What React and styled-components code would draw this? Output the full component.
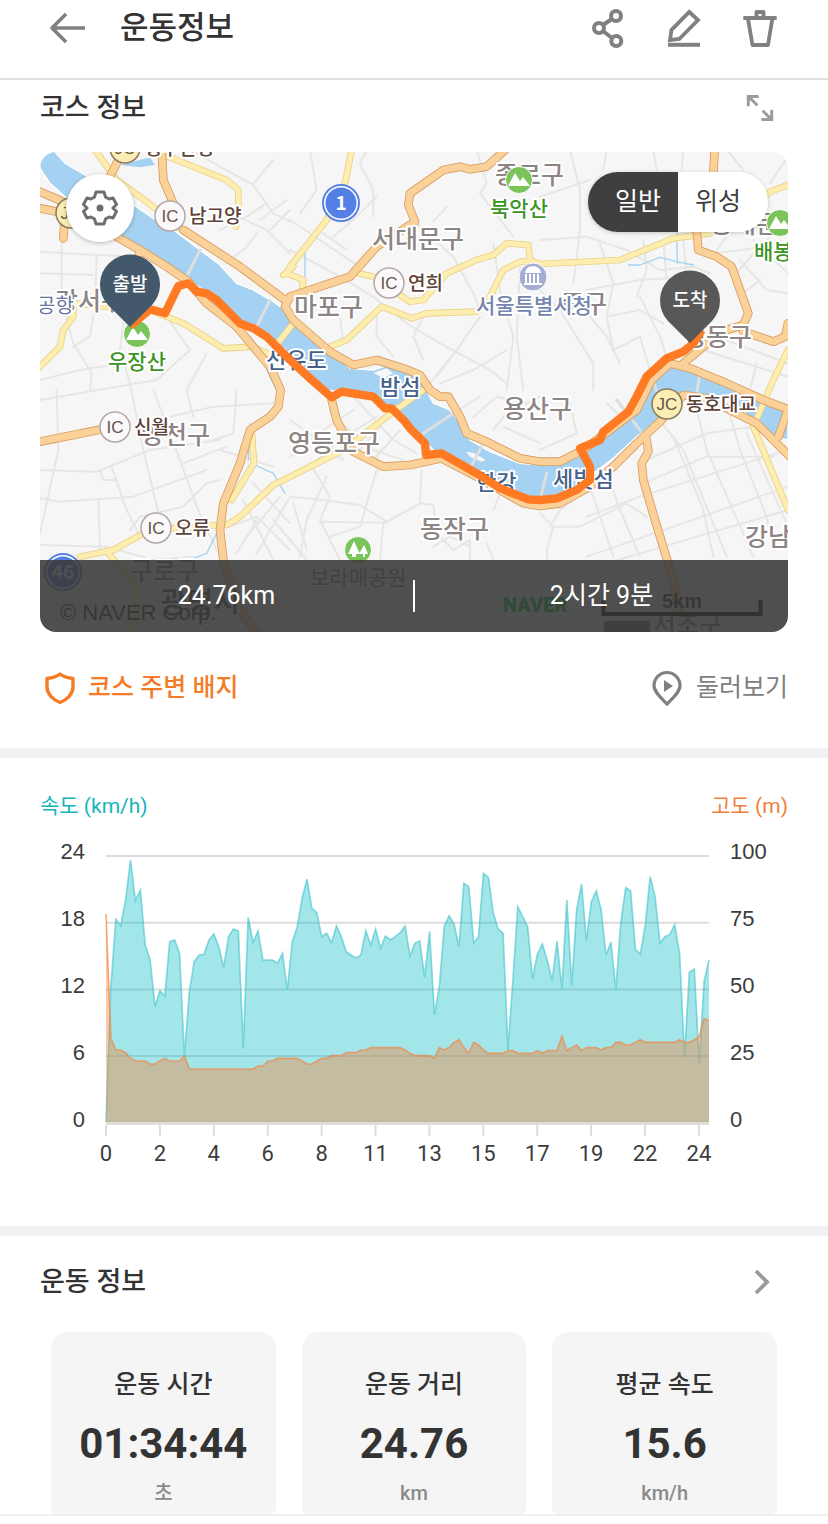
import React, { useState } from 'react'
import styled, { createGlobalStyle } from 'styled-components'

const GlobalStyle = createGlobalStyle`
*{
  box-sizing:border-box;
}
body{
  margin:0;
  background-color:#ffffff;
  color:#333333;
  font-family:Roboto,"Noto Sans CJK KR",sans-serif;
}
button{
  padding:0;
  border:none;
  background:transparent;
  color:inherit;
  font:inherit;
  cursor:pointer;
}
svg{
  display:block;
}
`
const Header = styled.header`
display:flex;
align-items:center;
padding:0 48px 22px;
border-bottom:2px solid #e2e2e2;
`
const PageTitle = styled.h1`
flex:1;
margin:0 0 0 32px;
font-size:31px;
line-height:56px;
font-weight:500;
`
const Tools = styled.div`
display:flex;
gap:36px;
`
const IconButton = styled.button`
display:flex;
color:${({ $soft }) => ($soft ? '#9b9b9b' : '#808080')};
`
const Section = styled.section`
padding:0 40px;
`
const SectionHead = styled.div`
display:flex;
align-items:center;
justify-content:space-between;
padding:${({ $wide }) => ($wide ? '26px 6px 30px 0' : '8px 8px 24px 0')};
`
const SectionTitle = styled.h2`
margin:0;
font-size:27px;
line-height:40px;
font-weight:500;
`
const MapCard = styled.div`
position:relative;
height:480px;
border-radius:16px;
overflow:hidden;
background-color:#f6f6f6;
`
const MapDrawing = styled.svg`
width:100%;
height:100%;
font-family:"Noto Sans CJK KR",sans-serif;
`
const SettingsButton = styled.button`
position:absolute;
top:22px;
left:26px;
width:68px;
height:68px;
display:flex;
align-items:center;
justify-content:center;
border-radius:50%;
background-color:#ffffff;
color:#6e6e6e;
box-shadow:0 1px 4px rgba(0,0,0,0.25);
`
const Toggle = styled.div`
position:absolute;
top:20px;
right:20px;
display:flex;
border-radius:30px;
overflow:hidden;
box-shadow:0 1px 4px rgba(0,0,0,0.2);
`
const ToggleButton = styled.button`
width:90px;
height:60px;
padding:${({ $side }) => ($side === 'left' ? '0 0 0 10px' : '0 10px 0 0')};
font-size:25px;
line-height:60px;
background-color:${({ $active }) => ($active ? '#3f3f3f' : '#ffffff')};
color:${({ $active }) => ($active ? '#ffffff' : '#3f3f3f')};
`
const Summary = styled.div`
position:absolute;
left:0;
right:0;
bottom:0;
display:flex;
align-items:center;
height:72px;
background-color:rgba(56,56,56,0.88);
color:#ffffff;
font-size:25px;
line-height:36px;
`
const SummaryItem = styled.span`
flex:1;
text-align:center;
`
const SummaryLine = styled.span`
width:2px;
height:32px;
background-color:#ffffff;
`
const Actions = styled.div`
display:flex;
justify-content:space-between;
padding:36px 0 40px;
`
const Action = styled.button`
display:flex;
align-items:center;
gap:8px;
font-size:25px;
line-height:40px;
font-weight:${({ $accent }) => ($accent ? 500 : 400)};
color:${({ $accent }) => ($accent ? '#f57b26' : '#808080')};
`
const Divider = styled.div`
height:10px;
background-color:#f1f2f4;
`
const Legend = styled.div`
display:flex;
justify-content:space-between;
padding:30px 0 12px;
`
const LegendItem = styled.span`
font-size:21px;
line-height:36px;
color:${({ $color }) => $color};
`
const Chart = styled.svg`
width:100%;
margin-bottom:50px;
fill:#3c3c3c;
`
const Cards = styled.div`
display:grid;
grid-template-columns:repeat(3,1fr);
gap:26px;
padding:0 11px;
`
const Card = styled.div`
padding:34px 0 7px;
border-radius:16px 16px 6px 6px;
background-color:#f5f5f5;
text-align:center;
`
const CardTitle = styled.div`
font-size:25px;
line-height:38px;
font-weight:500;
`
const CardValue = styled.div`
margin:15px 0 10px;
font-size:42px;
line-height:50px;
font-weight:700;
`
const CardUnit = styled.div`
font-size:20px;
line-height:28px;
font-weight:500;
color:#8a8a8a;
`
const Footer = styled.footer`
height:10px;
border-top:2px solid #f0f0f0;
`

// map geometry uses a grid of 3 units per pixel
const river = 'M40,0 L75,40 L130,72 L285,168 L340,205 L400,240 L480,300 L540,345 L590,400 L640,420 L700,455 L750,490 L870,605 L930,655 L1000,660 L1060,640 L1110,665 L1150,705 L1180,760 L1230,780 L1270,830 L1290,870 L1350,905 L1440,940 L1500,945 L1580,935 L1640,890 L1690,870 L1790,780 L1830,690 L1890,640 L1950,650 L2060,700 L2244,770 L2244,870 L2200,860 L2140,810 L2060,740 L1930,745 L1870,800 L1790,860 L1720,925 L1660,970 L1600,1020 L1500,1050 L1465,1048 L1370,1010 L1310,960 L1190,910 L1160,880 L1095,815 L1040,770 L1000,740 L860,720 L800,680 L750,620 L650,540 L580,510 L530,450 L490,420 L440,385 L290,290 L200,230 L80,145 L30,100 L0,55 L0,0 Z'

const track = 'M270,528 L330,478 L375,490 L415,408 L445,400 L470,425 L500,430 L530,450 L600,520 L640,535 L680,560 L750,630 L810,685 L875,742 L905,725 L1000,740 L1035,775 L1055,775 L1095,815 L1110,835 L1155,880 L1158,915 L1205,910 L1310,970 L1380,1015 L1465,1048 L1500,1050 L1550,1045 L1610,1020 L1650,990 L1650,950 L1620,895 L1680,870 L1690,845 L1765,785 L1790,740 L1820,680 L1880,625 L1930,605 L1960,580 L1985,540'

const highways = [
  'M430,240 L600,350 L735,450',
  'M0,125 L80,160 L230,260 L300,300 L380,350 L445,395 L500,460 L590,530 L640,590 L690,650 L722,720 L715,770 L690,800 L630,840 L600,940 L550,1060 L540,1140 L550,1230 L600,1380 L650,1450',
  'M0,175 L75,190 L70,265',
  'M300,300 L290,350',
  'M365,0 L370,90 L400,160',
  'M250,0 L210,80',
  'M1395,0 L1340,50 L1290,58 L1260,50 L1210,60 L1110,130 L1105,165 L1125,215 L1010,290 L930,380 L750,440 L735,470 L760,510 L870,605 L940,645 L1010,630 L1090,655 L1140,675 L1170,720 L1200,740 L1225,740 L1260,800 L1280,850 L1350,880 L1440,925 L1500,935 L1560,935 L1630,900 L1790,780 L1835,690 L1890,640 L1950,655 L2060,700 L2170,750 L2250,780',
  'M1930,640 L1990,590 L2060,540 L2110,525 L2125,490 L2075,350 L2030,320 L1975,300 L1970,240',
  'M2024,0 L2020,70',
  'M2110,545 L2200,575 L2235,560 L2244,520',
  'M1205,925 L1310,980 L1450,1060 L1500,1068 L1560,1060 L1650,1010 L1720,950 L1790,880 L1860,815 L1930,735 L2000,745 L2150,820 L2200,870 L2250,920',
  'M2244,780 L2215,860',
  'M1820,870 L1825,905 L1805,940 L1810,990 L1845,1110 L1900,1290 L1930,1450',
  'M875,750 L890,810 L940,905 L1030,950 L1110,945 L1205,925',
  'M0,875 L100,855 L200,835',
]
const roads = [
  'M165,0 L230,90 L300,140 L430,240',
  'M385,20 L560,90 L595,120 L595,170 L588,230',
  'M935,0 L915,100 L860,210 L750,350 L740,370 L790,390 L785,430',
  'M955,370 L1000,380 L1080,435 L1110,455 L1150,450 L1220,370 L1310,330 L1360,315 L1400,280 L1465,285 L1470,330 L1500,342 L1740,330 L1900,265 L2010,250 L2120,190 L2190,125 L2244,105',
  'M870,590 L920,570 L1025,470 L1115,505 L1160,490 L1310,485 L1350,440 L1390,360 L1440,335 L1470,335',
  'M330,480 L430,520 L550,595 L640,590 L700,620',
  'M0,650 L60,590 L70,540 L100,500 L100,460 L200,470',
  'M1150,720 L1080,770 L910,900 L750,980 L700,1005 L600,1100 L560,1125 L540,1120',
  'M635,840 L642,940 L575,1050',
  'M120,1220 L220,1200 L310,1150 L400,1135 L540,1125',
  'M205,1210 L290,1310 L290,1380 L260,1450',
  'M2244,600 L2200,690 L2140,830 L2244,1080',
  'M760,520 L705,590',
  'M730,375 L760,350',
]
const streets = [
  'M0,305 L170,315 L300,320', 'M170,315 L165,470 L150,560 L100,590', 'M65,280 L65,450 L100,580 L155,670 L150,720',
  'M0,370 L160,375', 'M450,0 L640,105 L700,190 L750,215', 'M700,30 L640,100', 'M595,200 L680,240 L750,310',
  'M540,240 L620,200 L680,160', 'M560,340 L620,290 L650,250', 'M660,210 L740,150', 'M690,240 L750,180', 'M480,300 L440,380 L380,500', 'M690,450 L650,530',
  'M0,690 L120,660 L250,640', 'M250,520 L240,600 L270,700 L310,900 L370,1150', 'M380,500 L450,600 L350,690 L0,750', 'M500,610 L440,720 L460,800',
  'M0,960 L170,965 L330,900 L540,870', 'M0,1045 L60,1055 L280,1040 L500,960', 'M50,720 L55,900 L0,1150', 'M175,1045 L180,1200', 'M180,960 L190,990 L225,990', 'M340,720 L420,930 L470,1070 L530,1200',
  'M270,1140 L300,1100 L430,1070 L500,1000 L540,990', 'M0,1185 L200,1190 L340,1230 L460,1220', 'M215,950 L260,1080 L300,1160', 'M430,940 L560,890', 'M540,900 L700,950', 'M590,720 L580,850 L520,870', 'M390,800 L520,770 L700,760',
  'M750,210 L840,270 L950,345', 'M850,250 L920,300', 'M810,0 L830,120 L780,190', 'M980,0 L960,40 L1000,120 L1000,200', 'M880,260 L950,200 L1010,140', 'M750,300 L900,380 L1000,440 L1100,520 L1200,580 L1350,660 L1400,700',
  'M1125,215 L1240,320 L1300,430 L1320,480', 'M1220,170 L1180,215', 'M1310,0 L1340,100 L1320,130 L1420,260', 'M1360,280 L1380,420 L1420,560 L1400,720', 'M1440,350 L1430,560 L1450,720', 'M1250,600 L1190,680', 'M1150,500 L1120,560 L1150,630', 'M1010,480 L1010,560 L1060,620', 'M900,500 L910,580',
  'M1320,500 L1250,600 L1170,700', 'M1400,600 L1300,660 L1200,700', 'M1500,420 L1560,480 L1660,640 L1660,720', 'M1600,440 L1700,560 L1740,640',
  'M1590,0 L1620,120 L1620,240 L1600,400', 'M1500,270 L1640,260 L1760,300 L1860,360 L1960,350 L2010,370', 'M1680,280 L1720,400 L1700,500 L1720,600', 'M1640,420 L1800,390 L1960,380', 'M1810,270 L1820,360 L1790,440', 'M1870,270 L1880,390', 'M1930,270 L1940,380', 'M1700,0 L1690,60', 'M1840,0 L1850,60', 'M1930,0 L1925,60', 'M1500,140 L1650,90',
  'M2020,310 L2100,300 L2180,290', 'M2080,380 L2150,300 L2244,210', 'M2100,330 L2180,420 L2244,430', 'M2140,270 L2244,370', 'M2030,300 L2060,260', 'M2110,430 L2160,390', 'M2190,100 L2244,20', 'M2060,0 L2110,60', 'M1990,600 L2244,680', 'M2030,560 L2244,640', 'M1700,500 L1800,480 L1870,520', 'M1800,440 L1860,560 L1880,620', 'M1720,600 L1800,560 L1830,660', 'M2150,640 L2130,720',
  'M1850,690 L1860,760', 'M1980,660 L1970,730', 'M1700,760 L1810,860', 'M1520,980 L1500,1060', 'M1150,850 L1240,790 L1320,740', 'M1320,890 L1290,960',
  'M1640,1100 L1800,1040 L2244,900', 'M1640,1220 L1900,1130 L2244,1010', 'M1700,1240 L2244,1080', 'M1820,930 L2000,850 L2140,830', 'M1810,1000 L2000,920 L2200,920', 'M1850,800 L1930,900 L2060,1220', 'M1960,740 L2000,900 L2140,1220', 'M2060,760 L2100,900 L2180,1100 L2200,1200', 'M1900,860 L1990,1080 L2020,1220', 'M2120,850 L2244,1130', 'M1700,970 L1740,1080 L1800,1220', 'M1650,1010 L1720,1220', 'M1500,1090 L1540,1130 L1620,1130 L1760,1060 L1820,1100', 'M1540,1130 L1520,1200 L1530,1300', 'M1650,1010 L1560,1080 L1530,1130',
  'M750,920 L850,840 L940,780', 'M800,960 L900,870 L1010,800', 'M750,810 L850,880 L910,930', 'M870,790 L1000,900 L1090,930', 'M940,740 L1060,870 L1130,910', 'M1000,930 L1080,840', 'M950,910 L1020,830',
  'M750,1040 L850,1050 L960,1065 L1040,1115 L1140,1060 L1145,960', 'M1010,960 L960,1130 L870,1160', 'M860,980 L800,1110 L780,1220', 'M810,940 L870,1040 L840,1110 L900,1230', 'M840,1115 L1040,1118', 'M1030,1120 L1020,1230', 'M1140,1060 L1180,1065 L1190,1150 L1240,1200 L1290,1170 L1290,1230', 'M1180,1190 L1230,1160 L1290,1190', 'M1340,1180 L1360,1230', 'M1380,1030 L1360,1080', 'M760,1060 L800,1200', 'M700,1110 L800,1230', 'M610,1050 L700,1230', 'M640,1000 L750,1120', 'M570,1130 L650,1100 L750,1200', 'M650,1210 L750,1040', 'M620,1160 L720,1040', 'M590,1210 L650,1110',
  'M1360,840 L1400,790 L1500,740', 'M1390,830 L1500,880', 'M1590,760 L1610,850 L1500,900', 'M1300,800 L1370,740 L1460,760',
]
const bridges = ['M480,300 L440,380', 'M690,450 L650,530', 'M1150,850 L1240,790', 'M1325,890 L1295,945', 'M1520,970 L1500,1050', 'M1730,750 L1800,840', 'M1840,690 L1860,760', 'M1980,670 L1970,730']
const streams = ['M635,600 L670,630 L690,680 L720,740', 'M645,945 L700,970 L735,1030', 'M630,820 L625,930', 'M795,310 L795,380', 'M1765,345 L1800,345 L1860,322 L1910,335 L1960,345', 'M1910,250 L1912,340', 'M560,1020 L530,1150 L500,1210 L460,1225']

const districts = [
  [15, 158, '강서구'], [332, 96, '서대문구'], [254, 164, '마포구'], [455, 32, '종로구'], [521, 161, '중구'],
  [463, 266, '용산구'], [248, 300, '영등포구'], [380, 386, '동작구'], [101, 292, '양천구'], [643, 194, '성동구'],
  [670, 81, '동대문구'], [705, 394, '강남구'], [90, 428, '구로구'], [613, 481, '서초구'],
]
const waters = [[226, 216, '선유도'], [340, 243, '밤섬'], [436, 338, '한강'], [513, 335, '세빛섬']]
const junctions = [
  [130, 64, 'IC', '남고양'], [349, 131, 'IC', '연희'], [75, 275, 'IC', '신월'], [116, 376, 'IC', '오류'],
  [627, 252, 'JC', '동호대교'], [31, 61, 'JC', ''], [85, -4, 'JC', '행주산성'],
]
const mountains = [[97, 182, 68, 217, '우장산'], [479, 28, 450, 64, '북악산'], [740, 71, 714, 107, '배봉산']]

// one sample every 0.2km, measured down from the top edge of the plot (3 units per pixel)
const speed = [1025, 620, 418, 438, 360, 240, 362, 330, 495, 540, 680, 632, 648, 485, 480, 520, 830, 635, 545, 525, 523, 480, 462, 500, 562, 470, 447, 453, 806, 412, 487, 453, 540, 540, 540, 550, 520, 630, 485, 440, 355, 298, 385, 398, 470, 460, 488, 438, 470, 515, 525, 534, 525, 452, 495, 447, 505, 468, 480, 470, 458, 438, 528, 490, 483, 592, 454, 704, 620, 438, 407, 432, 500, 310, 320, 490, 470, 280, 292, 400, 447, 460, 810, 600, 380, 410, 440, 597, 522, 492, 540, 602, 484, 628, 360, 616, 390, 312, 482, 365, 333, 390, 526, 486, 630, 430, 323, 333, 508, 522, 435, 290, 350, 490, 470, 464, 434, 520, 832, 577, 567, 850, 605, 540]
const altitude = [402, 775, 810, 810, 818, 835, 843, 843, 843, 852, 852, 843, 835, 843, 843, 843, 828, 867, 867, 867, 867, 867, 867, 867, 867, 867, 867, 867, 867, 867, 867, 858, 858, 843, 843, 835, 835, 835, 835, 835, 843, 852, 852, 843, 835, 835, 827, 827, 827, 818, 818, 818, 810, 810, 803, 803, 803, 803, 803, 803, 803, 810, 820, 827, 827, 827, 827, 835, 803, 810, 803, 787, 779, 803, 820, 787, 795, 810, 820, 820, 820, 820, 812, 812, 820, 820, 820, 820, 812, 820, 812, 812, 812, 769, 812, 803, 795, 812, 803, 803, 803, 810, 803, 803, 787, 787, 795, 795, 787, 779, 787, 787, 787, 787, 787, 787, 787, 779, 787, 787, 779, 770, 716, 722]
const toPoints = (list) => list.map((y, i) => `${(i * 1809) / (list.length - 1)},${y}`).join(' ')
const rows = [[24, 100], [18, 75], [12, 50], [6, 25], [0, 0]]
const ticks = [0, 2, 4, 6, 8, 11, 13, 15, 17, 19, 22, 24]

const stats = [
  { title: '운동 시간', value: '01:34:44', unit: '초' },
  { title: '운동 거리', value: '24.76', unit: 'km' },
  { title: '평균 속도', value: '15.6', unit: 'km/h' },
]

function Lines({ list, color, width }) {
  return list.map((d) => <path key={d} d={d} fill="none" stroke={color} strokeWidth={width} strokeLinejoin="round" strokeLinecap="round" />)
}

function Pin({ x, y, color, children }) {
  return (
    <g transform={`translate(${x} ${y})`}>
      <path d="M0,43 L-22,21 A30,30 0 1 1 22,21 Z" fill={color} />
      <text y="7" textAnchor="middle" fontSize="19" fontWeight="500" fill="#fff">{children}</text>
    </g>
  )
}

function CourseMap() {
  const halo = { stroke: '#fff', strokeWidth: 4, strokeLinejoin: 'round', paintOrder: 'stroke' }
  return (
    <MapDrawing viewBox="0 0 748 480" preserveAspectRatio="xMidYMid slice" role="img" aria-label="코스 지도">
      <g transform="translate(0 -2) scale(0.33333)">
        <Lines list={streets} color="#e6e6e4" width={6} />
        <path d={river} fill="#a5d2f2" stroke="#fff" strokeWidth="4" />
        <path d="M240,45 L330,22 L345,45 L300,52 Z" fill="#a5d2f2" />
        <path d="M1000,668 L1040,655 L1060,670 L1030,685 Z M1278,905 L1300,908 L1338,930 L1325,935 L1290,920 Z" fill="#f6f6f6" />
        <Lines list={bridges} color="#dcdfe0" width={9} />
        <Lines list={streams} color="#a5d2f2" width={4} />
        <Lines list={roads} color="#ead084" width={20} />
        <Lines list={roads} color="#fdeeb0" width={15} />
        <Lines list={highways} color="#d99a5c" width={26} />
        <Lines list={highways} color="#f9d199" width={21} />
      </g>

      <g fontSize="25" fontWeight="500" fill="#8d8484" {...halo}>
        {districts.map(([x, y, name]) => <text key={name} x={x} y={y}>{name}</text>)}
      </g>
      <text x="120" y="461" fontSize="29" fontWeight="500" fill="#555" {...halo}>광명시</text>
      <g fontSize="22" fill="#46618a" fontWeight="500" {...halo}>
        {waters.map(([x, y, name]) => <text key={name} x={x} y={y}>{name}</text>)}
      </g>
      <text x="-3" y="161" fontSize="20" fill="#66759b" {...halo}>공항</text>
      <text x="436" y="161" fontSize="21" fill="#7485b0" fontWeight="500" {...halo}>서울특별시청</text>

      <circle cx="493" cy="125" r="14" fill="#a3add2" stroke="#fff" />
      <path d="M485,121 A8,7 0 0 1 501,121 Z M485,122 H487 V131 H485 Z M489,122 H491 V131 H489 Z M493,122 H495 V131 H493 Z M497,122 H499 V131 H497 Z M484,131 H502 V133 H484 Z" fill="#fff" />

      {junctions.map(([x, y, type, name]) => (
        <g key={`${x}-${y}`}>
          <circle cx={x} cy={y} r="15" fill={type === 'JC' ? '#fbeeb4' : '#fbf9f9'} stroke={type === 'JC' ? '#8d7a5c' : '#b5a8a8'} strokeWidth="1.5" />
          <text x={x} y={y + 6} textAnchor="middle" fontSize="17" fontWeight="500" fontFamily="Liberation Sans, sans-serif" fill="#66534c">{type}</text>
          <text x={x + 19} y={y + 7} fontSize="19" fontWeight="500" fill="#5c4238" {...halo}>{name}</text>
        </g>
      ))}

      {mountains.map(([cx, cy, x, y, name]) => (
        <g key={name}>
          <circle cx={cx} cy={cy} r="13.5" fill="#7bc35b" stroke="#fff" />
          <path d={`M${cx - 11},${cy + 6} L${cx - 4},${cy - 7} L${cx + 1},${cy + 1} L${cx + 4},${cy - 3} L${cx + 11},${cy + 6} Z`} fill="#fff" />
          <text x={x} y={y} fontSize="21" fontWeight="500" fill="#3c9426" {...halo}>{name}</text>
        </g>
      ))}
      <circle cx="318" cy="398" r="13.5" fill="#7bc35b" stroke="#fff" />
      <path d="M314,389 L320,402 H316 V405 H312 V402 H308 Z M324,393 L328,402 H325 V405 H323 V402 H319 Z" fill="#fff" />
      <text x="270" y="433" fontSize="21" fill="#6e8a62" {...halo}>보라매공원</text>

      {[[301, 51, '1'], [23, 420, '46']].map(([x, y, no]) => (
        <g key={no}>
          <circle cx={x} cy={y} r="18" fill="#fff" stroke="#5a82e4" strokeWidth="2" />
          <circle cx={x} cy={y} r="15.5" fill="#5480e6" />
          <text x={x} y={y + 7} textAnchor="middle" fontSize="19" fontWeight="700" fill="#fff">{no}</text>
        </g>
      ))}

      <text x="20" y="468" fontSize="22" fontFamily="Liberation Sans, sans-serif" fill="#333">© NAVER Corp.</text>
      <rect x="452" y="440" width="90" height="30" rx="15" fill="#fff" />
      <text x="463" y="460" fontSize="20" fontWeight="900" fontFamily="Roboto, sans-serif" fill="#00c73c">NAVER</text>
      <text x="622" y="456" fontSize="20" fontWeight="700" fontFamily="Liberation Sans, sans-serif" fill="#333">5km</text>
      <path d="M563.5,448 V462 H720.5 V448" fill="none" stroke="#000" strokeWidth="4" />
      <rect x="564" y="469" width="46" height="11" fill="#777" />

      <g transform="translate(0 -2) scale(0.33333)">
        <path d={track} fill="none" stroke="#ff7a22" strokeWidth="25" strokeLinejoin="round" />
      </g>
      <Pin x={90} y={132} color="#44586b">출발</Pin>
      <Pin x={650} y={148} color="#585858">도착</Pin>
    </MapDrawing>
  )
}

function SpeedChart() {
  return (
    <Chart viewBox="0 0 748 340" role="img" aria-label="속도와 고도 그래프">
      {rows.map(([left, right], i) => (
        <g key={left} fontFamily="Liberation Sans, sans-serif" fontSize="22">
          <line x1="66" x2="669" y1={20 + i * 66.7} y2={20 + i * 66.7} stroke="#dddddd" strokeWidth="2" />
          <text x="45" y={23 + i * 67} textAnchor="end">{left}</text>
          <text x="690" y={23 + i * 67}>{right}</text>
        </g>
      ))}
      <g transform="translate(66 -56) scale(0.33333)">
        <polygon points={`${toPoints(speed)} 1809,1026 0,1026`} fill="#00b9c4" fillOpacity="0.36" />
        <polyline points={toPoints(speed)} fill="none" stroke="#3fc3cb" strokeOpacity="0.6" strokeWidth="5" />
        <polygon points={`${toPoints(altitude)} 1809,1026 0,1026`} fill="#f4823c" fillOpacity="0.42" />
        <polyline points={toPoints(altitude)} fill="none" stroke="#f4823c" strokeOpacity="0.65" strokeWidth="5" />
      </g>
      <line x1="66" x2="669" y1="288" y2="288" stroke="#dddddd" strokeWidth="2" />
      {ticks.map((tick, i) => (
        <g key={tick} fontSize="22">
          <line x1={66 + i * 53.9} x2={66 + i * 53.9} y1="289" y2="300" stroke="#dddddd" strokeWidth="2" />
          <text x={66 + i * 53.9} y="325" textAnchor="middle">{tick}</text>
        </g>
      ))}
    </Chart>
  )
}

export default function App() {
  const [view, setView] = useState('normal')

  return (
    <>
      <GlobalStyle />
      <Header>
        <IconButton aria-label="뒤로">
          <svg width="40" height="40" viewBox="0 0 40 40" fill="none" stroke="currentColor" strokeWidth="3.6" strokeLinejoin="round">
            <path d="M37,20 H4 M18,6 L4,20 L18,34" />
          </svg>
        </IconButton>
        <PageTitle>운동정보</PageTitle>
        <Tools>
          <IconButton aria-label="공유">
            <svg width="40" height="40" viewBox="0 0 40 40" fill="none" stroke="currentColor" strokeWidth="4">
              <circle cx="28" cy="8" r="5" />
              <circle cx="11" cy="20" r="5" />
              <circle cx="28.3" cy="33" r="5" />
              <path d="M24,11 L15,17 M15,23 L24,30" />
            </svg>
          </IconButton>
          <IconButton aria-label="편집">
            <svg width="40" height="40" viewBox="0 0 40 40" fill="none" stroke="currentColor" strokeWidth="3.8">
              <path d="M25.3,4 L34,12 L15.3,31 L6,32 L7.5,22 Z" />
              <path d="M4,36.8 H36" strokeWidth="4" />
            </svg>
          </IconButton>
          <IconButton aria-label="삭제">
            <svg width="40" height="40" viewBox="0 0 40 40" fill="none" stroke="currentColor" strokeWidth="3.8" strokeLinejoin="round">
              <path d="M3.3,10 H36.7 M16.5,10 V4 H23.5 V10 M8,11 L12.5,37 H28 L32.3,11" />
            </svg>
          </IconButton>
        </Tools>
      </Header>

      <Section>
        <SectionHead>
          <SectionTitle>코스 정보</SectionTitle>
          <IconButton $soft aria-label="확대">
            <svg width="40" height="40" viewBox="0 0 40 40" fill="none" stroke="currentColor" strokeWidth="3" strokeLinecap="round">
              <path d="M8.3,17 V8.5 H17.500 M9,9 L16.500,16.500 M31.700,23 V31.500 H22.500 M31,31 L23.500,23.500" />
            </svg>
          </IconButton>
        </SectionHead>
        <MapCard>
          <CourseMap />
          <SettingsButton aria-label="지도 설정">
            <svg width="36" height="36" viewBox="0 0 36 36" fill="none" stroke="currentColor" strokeWidth="3" strokeLinejoin="round">
              <path d="M14,2 H22 L23.5,7 L27,9 L31,8 L34.5,14.5 L31,18 L34.5,21.5 L31,28 L27,27 L23.5,29 L22,34 H14 L12.5,29 L9,27 L5,28 L1.5,21.5 L5,18 L1.5,14.5 L5,8 L9,9 L12.5,7 Z" />
              <circle cx="18" cy="18" r="3.5" fill="currentColor" stroke="none" />
            </svg>
          </SettingsButton>
          <Toggle>
            <ToggleButton $side="left" $active={view === 'normal'} onClick={() => setView('normal')}>일반</ToggleButton>
            <ToggleButton $side="right" $active={view === 'satellite'} onClick={() => setView('satellite')}>위성</ToggleButton>
          </Toggle>
          <Summary>
            <SummaryItem>24.76km</SummaryItem>
            <SummaryLine />
            <SummaryItem>2시간 9분</SummaryItem>
          </Summary>
        </MapCard>
        <Actions>
          <Action $accent>
            <svg width="40" height="40" viewBox="0 0 40 40" fill="none" stroke="currentColor" strokeWidth="3.4" strokeLinejoin="round">
              <path d="M20,6 C23,8.5 27,10 33,10.5 V19 C33,26 27,32 20,34.5 C13,32 7,26 7,19 V10.5 C13,10 17,8.5 20,6 Z" />
            </svg>
            코스 주변 배지
          </Action>
          <Action>
            <svg width="40" height="40" viewBox="0 0 40 40" fill="none" stroke="currentColor" strokeWidth="3.2">
              <path d="M19,36 C13,30 6,24 6,17.5 A13,13 0 0 1 32,17.5 C32,24 25,30 19,36 Z" />
              <path d="M16,12 L25,18 L16,24 Z" fill="currentColor" stroke="none" />
            </svg>
            둘러보기
          </Action>
        </Actions>
      </Section>

      <Divider />

      <Section>
        <Legend>
          <LegendItem $color="#14b4bd">속도 (km/h)</LegendItem>
          <LegendItem $color="#f0803a">고도 (m)</LegendItem>
        </Legend>
        <SpeedChart />
      </Section>

      <Divider />

      <Section>
        <SectionHead $wide>
          <SectionTitle>운동 정보</SectionTitle>
          <IconButton $soft aria-label="더보기">
            <svg width="40" height="40" viewBox="0 0 40 40" fill="none" stroke="currentColor" strokeWidth="3.8">
              <path d="M14,9 L25,20 L14,31" />
            </svg>
          </IconButton>
        </SectionHead>
        <Cards>
          {stats.map((stat) => (
            <Card key={stat.title}>
              <CardTitle>{stat.title}</CardTitle>
              <CardValue>{stat.value}</CardValue>
              <CardUnit>{stat.unit}</CardUnit>
            </Card>
          ))}
        </Cards>
      </Section>
      <Footer />
    </>
  )
}
